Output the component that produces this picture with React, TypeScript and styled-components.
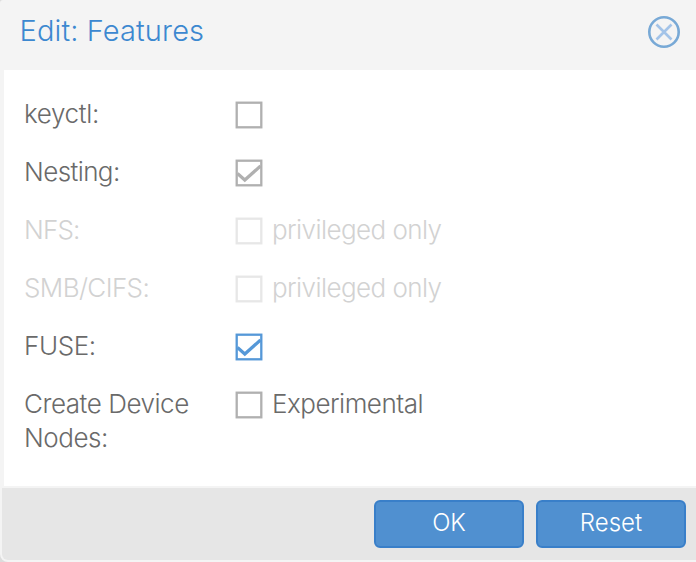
import React from "react";
import styled, { createGlobalStyle } from "styled-components";

const GlobalStyle = createGlobalStyle`
  * { box-sizing: border-box; }
  body { margin: 0; background: #dcdcdc; overflow: hidden; }
`;

const Dialog = styled.div`
  display: flex;
  flex-direction: column;
  width: 696px;
  height: 562px;
  padding-bottom: 2px;
  background: #f4f4f4;
  border-radius: 3px 0 0 8px;
  font-family: Inter, "Liberation Sans", sans-serif;
  font-weight: 300;
  overflow: hidden;
`;

const Header = styled.header`
  display: flex;
  justify-content: space-between;
  height: 70px;
  padding: 14px 15px 0 19.5px;
`;

const Title = styled.h1`
  margin: 0;
  font-size: 29px;
  font-weight: 300;
  line-height: 33px;
  color: #3c88d0;
`;

const CloseButton = styled.button`
  width: 34px;
  height: 34px;
  margin-top: 1px;
  padding: 0;
  border: 0;
  background: none;
  svg { display: block; }
`;

const Body = styled.main`
  height: 416px;
  margin-left: 4px;
  padding: 27px 20px 0;
  background: #fff;
`;

const Row = styled.label<{ $disabled?: boolean }>`
  display: flex;
  align-items: flex-start;
  min-height: 58px;
  font-size: 26px;
  line-height: 34px;
  color: ${(p) => (p.$disabled ? "#d2d2d2" : "#6a6a6a")};
`;

const Name = styled.span`
  width: 210px;
`;

const Text = styled.span<{ $spacing: number }>`
  letter-spacing: ${(p) => p.$spacing}px;
  white-space: nowrap;
`;

const Box = styled.svg`
  flex: none;
  width: 30px;
  height: 30px;
  margin: 3px 8px 0 0;
`;

const Footer = styled.footer`
  display: flex;
  justify-content: flex-end;
  gap: 12px;
  height: 72px;
  margin: 2px 0 0 2px;
  padding: 12px 10px;
  background: #e6e6e6;
  border-radius: 0 0 0 6px;
`;

const Button = styled.button`
  width: 150px;
  height: 48px;
  padding: 0 0 2px;
  border: 2px solid #397fc9;
  border-radius: 6px;
  background: #5090d0;
  color: #fff;
  font: 300 24px/42px Inter, "Liberation Sans", sans-serif;
`;

type Field = {
  name: string[];
  spacing: number;
  note?: string;
  noteSpacing?: number;
  color: string;
  checked?: boolean;
  disabled?: boolean;
};

const fields: Field[] = [
  { name: ["keyctl:"], spacing: -0.35, color: "#b0b0b0" },
  { name: ["Nesting:"], spacing: -0.58, color: "#b0b0b0", checked: true },
  { name: ["NFS:"], spacing: -0.8, color: "#e7e7e7", note: "privileged only", noteSpacing: -0.57, disabled: true },
  { name: ["SMB/CIFS:"], spacing: -0.6, color: "#e7e7e7", note: "privileged only", noteSpacing: -0.57, disabled: true },
  { name: ["FUSE:"], spacing: -0.4, color: "#5598d8", checked: true },
  { name: ["Create Device", "Nodes:"], spacing: -0.46, color: "#b0b0b0", note: "Experimental", noteSpacing: -0.5 },
];

const Checkbox = ({ color, checked }: { color: string; checked?: boolean }) => (
  <Box viewBox="0 0 30 30" fill="none" stroke={color}>
    <rect x="2.7" y="2.7" width="24.6" height="24.6" strokeWidth="2.3" />
    {checked && <path d="M3.5 15.5 L10.8 22 L26.5 8" strokeWidth="3.2" />}
  </Box>
);

export default function App() {
  return (
    <>
      <GlobalStyle />
      <Dialog>
        <Header>
          <Title><Text $spacing={0.13}>Edit: Features</Text></Title>
          <CloseButton aria-label="Close">
            <svg width="34" height="34" viewBox="0 0 34 34" fill="none">
              <circle cx="17" cy="17" r="14.7" stroke="#78a9d6" strokeWidth="2.6" />
              <path d="M9.5 9.5 L24.5 24.5 M24.5 9.5 L9.5 24.5" stroke="#a3c3e8" strokeWidth="2.7" />
            </svg>
          </CloseButton>
        </Header>
        <Body>
          {fields.map((f) => (
            <Row key={f.name[0]} $disabled={f.disabled}>
              <Name>
                {f.name.map((line) => (
                  <div key={line}><Text $spacing={f.spacing}>{line}</Text></div>
                ))}
              </Name>
              <Checkbox color={f.color} checked={f.checked} />
              {f.note && <Text $spacing={f.noteSpacing ?? 0}>{f.note}</Text>}
            </Row>
          ))}
        </Body>
        <Footer>
          <Button><Text $spacing={0}>OK</Text></Button>
          <Button><Text $spacing={0}>Reset</Text></Button>
        </Footer>
      </Dialog>
    </>
  );
}
